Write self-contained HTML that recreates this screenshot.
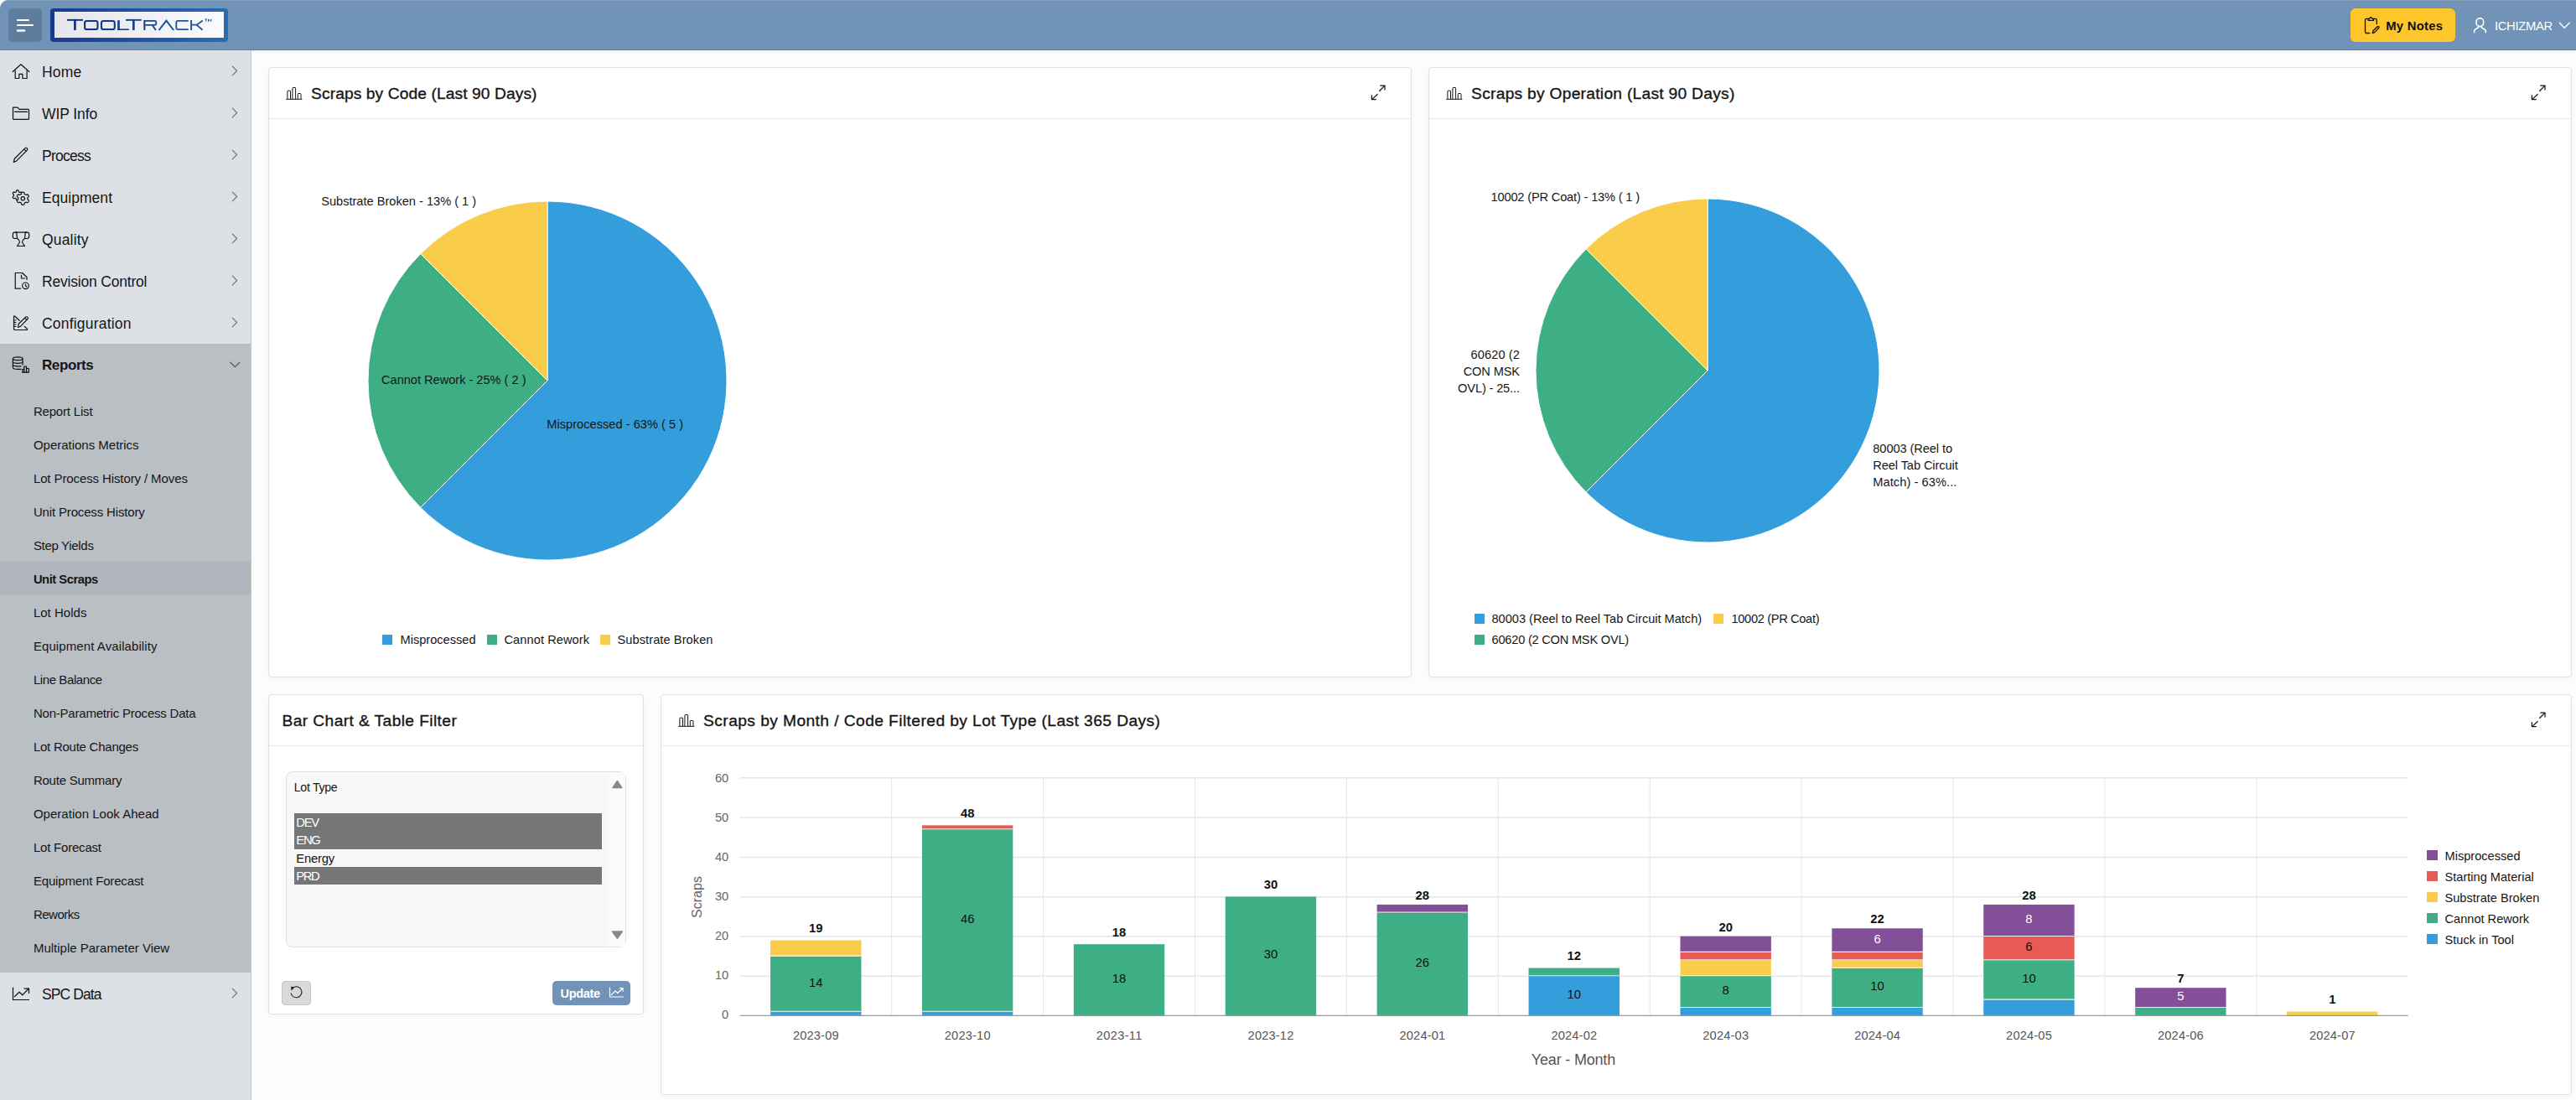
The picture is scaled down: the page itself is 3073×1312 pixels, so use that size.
<!DOCTYPE html>
<html><head><meta charset="utf-8"><title>Unit Scraps</title><style>*{box-sizing:border-box;margin:0;padding:0}
html,body{width:3073px;height:1312px;overflow:hidden;background:#fcfcfc;font-family:"Liberation Sans",sans-serif;color:#161616}
.abs{position:absolute}
.tx{position:absolute;white-space:pre}
#hdr{position:absolute;left:0;top:0;width:3073px;height:60px;background:#7093b7;border-bottom:1px solid #5f7f9f;border-top-left-radius:10px;box-shadow:inset 0 1px 0 #84a1bd,0 1px 3px rgba(0,0,0,0.08)}
#side{position:absolute;left:0;top:60px;width:300px;height:1252px;background:#dde0e4;border-right:1px solid #c3c6cb}
.panel{position:absolute;background:#fff;border:1px solid #e2e2e2;border-radius:4px;box-shadow:0 2px 4px rgba(0,0,0,0.035)}
.ph{position:absolute;left:0;top:0;right:0;height:61px;border-bottom:1px solid #e8e8e8}
</style></head><body>
<div id="hdr"></div>
<div class="abs" style="left:10px;top:10px;width:40px;height:40px;background:#5e7c9b;border-radius:5px"></div>
<svg class="abs" style="left:0;top:0" width="60" height="60"><g stroke="#fff" stroke-linecap="round"><path d="M21 24H34" stroke-width="2"/><path d="M21 30H39" stroke-width="2"/><path d="M21 36.5H29" stroke-width="2.6"/></g></svg>
<div class="abs" style="left:60px;top:10px;width:212px;height:40px;border-radius:4px;background:linear-gradient(90deg,#173b8b,#2a6cb1)"></div>
<div class="abs" style="left:65px;top:14px;width:202px;height:31px;background:linear-gradient(90deg,#e5e5ea,#fafbfd)"></div>
<svg class="abs" style="left:0;top:0" width="300" height="60">
<defs><linearGradient id="lg" gradientUnits="userSpaceOnUse" x1="80" y1="0" x2="252" y2="0"><stop offset="0" stop-color="#0a2c80"/><stop offset="1" stop-color="#1f5ea7"/></linearGradient></defs>
<g fill="url(#lg)">
<rect x="80" y="22.9" width="19" height="1.9"/><rect x="88.1" y="22.9" width="2.6" height="13.1"/>
<rect x="140.2" y="24.2" width="2.6" height="11.8"/><rect x="140.2" y="34.4" width="13.6" height="1.6"/>
<rect x="150" y="22.9" width="18.7" height="1.9"/><rect x="158" y="22.9" width="2.7" height="13.1"/>
<rect x="171.3" y="24" width="2.1" height="12"/>
<rect x="227.1" y="24" width="2" height="12"/>
</g>
<g fill="none" stroke="url(#lg)">
<rect x="101.1" y="25.05" width="15.4" height="9.95" rx="2.3" stroke-width="2.1"/>
<rect x="121" y="25.05" width="15.8" height="9.95" rx="2.3" stroke-width="2.1"/>
<path d="M172.2 24.9H184.3Q186.3 24.9 186.3 26.9V27.8Q186.3 29.8 184.3 29.8H172.2" stroke-width="1.8"/>
<path d="M181.6 29.8L185.9 36" stroke-width="2"/>
<path d="M189.6 36L198.4 24.7L207.2 36" stroke-width="2"/>
<path d="M224.8 24.9H212.4Q210.3 24.9 210.3 27V33Q210.3 35.1 212.4 35.1H224.8" stroke-width="1.8"/>
<path d="M241.8 24.6L234.6 29.7L241.6 35.8M228.5 29.7H234.6" stroke-width="1.8"/>
</g>
<g fill="#2263a9"><rect x="244.5" y="22.5" width="2.6" height="0.9"/><rect x="245.35" y="22.5" width="0.9" height="3.4"/></g><path d="M248.5 25.9V22.9L250.2 24.8L251.9 22.9V25.9" fill="none" stroke="#2263a9" stroke-width="1"/>
</svg>
<div class="abs" style="left:2804px;top:10px;width:125px;height:40px;background:#fec62a;border-radius:6px"></div>
<svg class="abs" style="left:2815px;top:15px" width="30" height="30" viewBox="0 0 30 30" fill="none" stroke="#111" stroke-width="1.3" stroke-linejoin="round" stroke-linecap="round"><path d="M11.7 24.5H8Q6.5 24.5 6.5 23V8.9Q6.5 7.4 8 7.4H10.5"/><path d="M16.2 7.4H18.8Q20.3 7.4 20.3 8.9V13.6"/><path d="M10.2 9.4H16.5V8.2L13.3 5.4L10.2 8.2Z"/><path d="M15.3 24.6L16 21.7L21.2 16.7Q22 16 22.8 16.7Q23.5 17.5 22.8 18.3L17.7 23.6Z"/></svg>
<svg class="abs" style="left:2943px;top:15px" width="30" height="30" viewBox="0 0 30 30" fill="none" stroke="#fff" stroke-width="1.6" stroke-linecap="round"><ellipse cx="15.4" cy="11.6" rx="4.4" ry="5"/><path d="M8.6 23.6V22Q8.6 20.3 10.6 19.5L12.2 18.8Q13.4 18.2 13.9 16.6"/><path d="M22.2 23.6V22Q22.2 20.3 20.2 19.5L18.6 18.8Q17.4 18.2 16.9 16.6"/></svg>
<svg class="abs" style="left:3045px;top:15px" width="30" height="30" viewBox="0 0 30 30" fill="none" stroke="#fff" stroke-width="1.4" stroke-linecap="round" stroke-linejoin="round"><path d="M8.3 12.3L14.2 18.2L20.1 12.3"/></svg>
<div id="side"></div>
<div class="abs" style="left:0;top:410px;width:299px;height:750px;background:#babfc4"></div>
<div class="abs" style="left:0;top:670px;width:299px;height:40px;background:#b1b5be"></div>
<svg class="abs" style="left:10px;top:70px" width="30" height="30" viewBox="0 0 30 30" fill="none" stroke="#111" stroke-width="1.2" stroke-linejoin="round" stroke-linecap="round"><path d="M5.2 15.5L15 6.8L24.8 15.5"/><path d="M8.2 14V23.5H12.8V18.3H16.9V23.5H22.1V14"/></svg>
<svg class="abs" style="left:265px;top:70px" width="30" height="30" viewBox="0 0 30 30" fill="none" stroke="#707070" stroke-width="1.15" stroke-linecap="round" stroke-linejoin="round"><path d="M12.3 9.2L17.6 14.5L12.3 19.8"/></svg>
<svg class="abs" style="left:10px;top:120px" width="30" height="30" viewBox="0 0 30 30" fill="none" stroke="#111" stroke-width="1.2" stroke-linejoin="round" stroke-linecap="round"><path d="M5.5 8.2H10.9L13.1 10.4H23.5Q24.5 10.4 24.5 11.4V21.4Q24.5 22.4 23.5 22.4H6.5Q5.5 22.4 5.5 21.4Z"/><path d="M7.5 13.4H22.5"/></svg>
<svg class="abs" style="left:265px;top:120px" width="30" height="30" viewBox="0 0 30 30" fill="none" stroke="#707070" stroke-width="1.15" stroke-linecap="round" stroke-linejoin="round"><path d="M12.3 9.2L17.6 14.5L12.3 19.8"/></svg>
<svg class="abs" style="left:10px;top:170px" width="30" height="30" viewBox="0 0 30 30" fill="none" stroke="#111" stroke-width="1.2" stroke-linejoin="round" stroke-linecap="round"><path d="M6.3 23.5L7.2 19.5L19.8 6.9Q21.3 5.6 22.4 6.9Q23.5 8.2 22.1 9.4L9.5 22.2Z"/><path d="M19 8.2L21 10.2"/></svg>
<svg class="abs" style="left:265px;top:170px" width="30" height="30" viewBox="0 0 30 30" fill="none" stroke="#707070" stroke-width="1.15" stroke-linecap="round" stroke-linejoin="round"><path d="M12.3 9.2L17.6 14.5L12.3 19.8"/></svg>
<svg class="abs" style="left:10px;top:220px" width="30" height="30" viewBox="0 0 30 30" fill="none" stroke="#111" stroke-width="1.2" stroke-linejoin="round" stroke-linecap="round"><path d="M15.10 12.90L15.10 12.75L15.10 12.60L15.09 12.45L15.10 12.29L15.15 12.13L15.29 11.95L15.58 11.71L15.96 11.42L16.23 11.14L16.33 10.89L16.32 10.67L16.26 10.47L16.19 10.27L16.10 10.08L16.00 9.90L15.89 9.72L15.77 9.55L15.64 9.38L15.49 9.24L15.30 9.12L15.04 9.08L14.66 9.17L14.22 9.35L13.87 9.49L13.64 9.51L13.48 9.47L13.34 9.41L13.21 9.33L13.08 9.25L12.95 9.18L12.82 9.10L12.69 9.03L12.56 8.96L12.43 8.87L12.31 8.75L12.22 8.53L12.16 8.16L12.10 7.69L11.99 7.32L11.82 7.11L11.63 7.01L11.43 6.95L11.22 6.92L11.01 6.90L10.80 6.90L10.59 6.90L10.38 6.92L10.17 6.95L9.97 7.01L9.78 7.11L9.61 7.32L9.50 7.69L9.44 8.16L9.38 8.53L9.29 8.75L9.17 8.87L9.04 8.96L8.91 9.03L8.78 9.10L8.65 9.18L8.52 9.25L8.39 9.33L8.26 9.41L8.12 9.47L7.96 9.51L7.73 9.49L7.38 9.35L6.94 9.17L6.56 9.08L6.30 9.12L6.11 9.24L5.96 9.38L5.83 9.55L5.71 9.72L5.60 9.90L5.50 10.08L5.41 10.27L5.34 10.47L5.28 10.67L5.27 10.89L5.37 11.14L5.64 11.42L6.02 11.71L6.31 11.95L6.45 12.13L6.50 12.29L6.51 12.45L6.50 12.60L6.50 12.75L6.50 12.90L6.50 13.05L6.50 13.20L6.51 13.35L6.50 13.51L6.45 13.67L6.31 13.85L6.02 14.09L5.64 14.38L5.37 14.66L5.27 14.91L5.28 15.13L5.34 15.33L5.41 15.53L5.50 15.72L5.60 15.90L5.71 16.08L5.83 16.25L5.96 16.42L6.11 16.56L6.30 16.68L6.56 16.72L6.94 16.63L7.38 16.45L7.73 16.31L7.96 16.29L8.12 16.33L8.26 16.39L8.39 16.47L8.52 16.55L8.65 16.62L8.78 16.70L8.91 16.77L9.04 16.84L9.17 16.93L9.29 17.05L9.38 17.27L9.44 17.64L9.50 18.11L9.61 18.48L9.78 18.69L9.97 18.79L10.17 18.85L10.38 18.88L10.59 18.90L10.80 18.90L11.01 18.90L11.22 18.88L11.43 18.85L11.63 18.79L11.82 18.69L11.99 18.48L12.10 18.11L12.16 17.64L12.22 17.27L12.31 17.05L12.43 16.93L12.56 16.84L12.69 16.77L12.82 16.70L12.95 16.62L13.08 16.55L13.21 16.47L13.34 16.39L13.48 16.33L13.64 16.29L13.87 16.31L14.22 16.45L14.66 16.63L15.04 16.72L15.30 16.68L15.49 16.56L15.64 16.42L15.77 16.25L15.89 16.08L16.00 15.90L16.10 15.72L16.19 15.53L16.26 15.33L16.32 15.13L16.33 14.91L16.23 14.66L15.96 14.38L15.58 14.09L15.29 13.85L15.15 13.67L15.10 13.51L15.09 13.35L15.10 13.20L15.10 13.05Z"/><path d="M22.90 16.80L22.90 16.60L22.89 16.41L22.89 16.21L22.90 16.01L22.95 15.80L23.11 15.56L23.45 15.27L23.89 14.91L24.20 14.56L24.31 14.25L24.30 13.97L24.22 13.72L24.12 13.47L24.01 13.23L23.88 13.00L23.74 12.77L23.59 12.55L23.43 12.35L23.25 12.16L23.01 12.00L22.69 11.94L22.23 12.04L21.70 12.24L21.28 12.38L20.99 12.40L20.78 12.34L20.60 12.25L20.44 12.15L20.27 12.05L20.10 11.95L19.93 11.85L19.76 11.76L19.59 11.66L19.42 11.56L19.26 11.41L19.14 11.15L19.05 10.70L18.96 10.14L18.81 9.70L18.60 9.45L18.35 9.33L18.09 9.26L17.83 9.23L17.57 9.21L17.30 9.20L17.03 9.21L16.77 9.23L16.51 9.26L16.25 9.33L16.00 9.45L15.79 9.70L15.64 10.14L15.55 10.70L15.46 11.15L15.34 11.41L15.18 11.56L15.01 11.66L14.84 11.76L14.67 11.85L14.50 11.95L14.33 12.05L14.16 12.15L14.00 12.25L13.82 12.34L13.61 12.40L13.32 12.38L12.90 12.24L12.37 12.04L11.91 11.94L11.59 12.00L11.35 12.16L11.17 12.35L11.01 12.55L10.86 12.77L10.72 13.00L10.59 13.23L10.48 13.47L10.38 13.72L10.30 13.97L10.29 14.25L10.40 14.56L10.71 14.91L11.15 15.27L11.49 15.56L11.65 15.80L11.70 16.01L11.71 16.21L11.71 16.41L11.70 16.60L11.70 16.80L11.70 17.00L11.71 17.19L11.71 17.39L11.70 17.59L11.65 17.80L11.49 18.04L11.15 18.33L10.71 18.69L10.40 19.04L10.29 19.35L10.30 19.63L10.38 19.88L10.48 20.13L10.59 20.37L10.72 20.60L10.86 20.83L11.01 21.05L11.17 21.25L11.35 21.44L11.59 21.60L11.91 21.66L12.37 21.56L12.90 21.36L13.32 21.22L13.61 21.20L13.82 21.26L14.00 21.35L14.16 21.45L14.33 21.55L14.50 21.65L14.67 21.75L14.84 21.84L15.01 21.94L15.18 22.04L15.34 22.19L15.46 22.45L15.55 22.90L15.64 23.46L15.79 23.90L16.00 24.15L16.25 24.27L16.51 24.34L16.77 24.37L17.03 24.39L17.30 24.40L17.57 24.39L17.83 24.37L18.09 24.34L18.35 24.27L18.60 24.15L18.81 23.90L18.96 23.46L19.05 22.90L19.14 22.45L19.26 22.19L19.42 22.04L19.59 21.94L19.76 21.84L19.93 21.75L20.10 21.65L20.27 21.55L20.44 21.45L20.60 21.35L20.78 21.26L20.99 21.20L21.28 21.22L21.70 21.36L22.23 21.56L22.69 21.66L23.01 21.60L23.25 21.44L23.43 21.25L23.59 21.05L23.74 20.83L23.88 20.60L24.01 20.37L24.12 20.13L24.22 19.88L24.30 19.63L24.31 19.35L24.20 19.04L23.89 18.69L23.45 18.33L23.11 18.04L22.95 17.80L22.90 17.59L22.89 17.39L22.89 17.19L22.90 17.00Z" fill="#dde0e4"/><circle cx="17.3" cy="16.8" r="2.2"/></svg>
<svg class="abs" style="left:265px;top:220px" width="30" height="30" viewBox="0 0 30 30" fill="none" stroke="#707070" stroke-width="1.15" stroke-linecap="round" stroke-linejoin="round"><path d="M12.3 9.2L17.6 14.5L12.3 19.8"/></svg>
<svg class="abs" style="left:10px;top:270px" width="30" height="30" viewBox="0 0 30 30" fill="none" stroke="#111" stroke-width="1.2" stroke-linejoin="round" stroke-linecap="round"><path d="M9.8 7.2H7.5Q5.2 7.2 5.2 10.8Q5.2 14.5 7.5 14.5H10.3"/><path d="M20.2 7.2H22.5Q24.8 7.2 24.8 10.8Q24.8 14.5 22.5 14.5H19.7"/><path d="M8.5 7.2H21.5"/><path d="M9.8 7.2L10.3 14Q13.5 16.5 13.5 19L10.5 23.5H19.5L16.5 19Q16.5 16.5 19.7 14L20.2 7.2"/></svg>
<svg class="abs" style="left:265px;top:270px" width="30" height="30" viewBox="0 0 30 30" fill="none" stroke="#707070" stroke-width="1.15" stroke-linecap="round" stroke-linejoin="round"><path d="M12.3 9.2L17.6 14.5L12.3 19.8"/></svg>
<svg class="abs" style="left:10px;top:320px" width="30" height="30" viewBox="0 0 30 30" fill="none" stroke="#111" stroke-width="1.2" stroke-linejoin="round" stroke-linecap="round"><path d="M14.5 24.2H8.2V5.5H16.5L22 10.5V13.5"/><path d="M15.5 8V12H19.5"/><circle cx="20.5" cy="20.8" r="3.8"/><path d="M20.5 19.2V20.8L21.7 22"/></svg>
<svg class="abs" style="left:265px;top:320px" width="30" height="30" viewBox="0 0 30 30" fill="none" stroke="#707070" stroke-width="1.15" stroke-linecap="round" stroke-linejoin="round"><path d="M12.3 9.2L17.6 14.5L12.3 19.8"/></svg>
<svg class="abs" style="left:10px;top:370px" width="30" height="30" viewBox="0 0 30 30" fill="none" stroke="#111" stroke-width="1.2" stroke-linejoin="round" stroke-linecap="round"><path d="M13.2 12.3L7.8 7.3Q6.5 6.3 6.5 8V22.2Q6.5 23.5 7.8 23.5H21.8Q23.5 23.5 22.2 22.2L19.2 19.3"/><path d="M7 12H9M7 14.5H9M7 17H9M7 19.5H9"/><path d="M11.5 20.5L12.3 16.3L20.5 8.3Q22 7.2 23 8.3Q24 9.5 22.8 10.6L14.6 19.2Z"/><path d="M19.7 9.4L21.8 11.5"/></svg>
<svg class="abs" style="left:265px;top:370px" width="30" height="30" viewBox="0 0 30 30" fill="none" stroke="#707070" stroke-width="1.15" stroke-linecap="round" stroke-linejoin="round"><path d="M12.3 9.2L17.6 14.5L12.3 19.8"/></svg>
<svg class="abs" style="left:10px;top:420px" width="30" height="30" viewBox="0 0 30 30" fill="none" stroke="#111" stroke-width="1.2" stroke-linejoin="round" stroke-linecap="round"><ellipse cx="11.2" cy="7.8" rx="5.8" ry="1.9"/><path d="M5.4 7.8V18.2Q5.4 20.3 11.2 20.3H15"/><path d="M17 7.8V15"/><path d="M5.4 11.5Q5.4 13.3 11.2 13.3Q17 13.3 17 11.5"/><path d="M5.4 15Q5.4 16.8 11.2 16.8H15"/><path d="M16.8 24.2V20.5H18.8V17H21.5V19.5H24.3V24.2Z"/><path d="M18.8 20.5V24.2M21.5 19.5V24.2"/></svg>
<svg class="abs" style="left:265px;top:420px" width="30" height="30" viewBox="0 0 30 30" fill="none" stroke="#555" stroke-width="1.3" stroke-linecap="round" stroke-linejoin="round"><path d="M9.8 12.3L15.3 17.6L20.8 12.3"/></svg>
<svg class="abs" style="left:10px;top:1170px" width="30" height="30" viewBox="0 0 30 30" fill="none" stroke="#111" stroke-width="1.2" stroke-linejoin="round" stroke-linecap="round"><path d="M5.5 8V22.5H24.5"/><path d="M7.5 18.5L13 13.2L16.8 16.8L23.8 9.5"/><path d="M19 9.2H24.5V14.5"/></svg>
<svg class="abs" style="left:265px;top:1170px" width="30" height="30" viewBox="0 0 30 30" fill="none" stroke="#707070" stroke-width="1.15" stroke-linecap="round" stroke-linejoin="round"><path d="M12.3 9.2L17.6 14.5L12.3 19.8"/></svg>
<div class="panel" style="left:320px;top:80px;width:1364px;height:728px"><div class="ph"></div></div>
<div class="panel" style="left:1704px;top:80px;width:1364px;height:728px"><div class="ph"></div></div>
<div class="panel" style="left:320px;top:828px;width:448px;height:382px"><div class="ph"></div></div>
<div class="panel" style="left:788px;top:828px;width:2280px;height:478px"><div class="ph"></div></div>
<svg class="abs" style="left:335px;top:95px" width="30" height="30" viewBox="0 0 30 30" fill="none" stroke="#161616" stroke-width="1.0" stroke-linejoin="round"><path d="M6.3 23.3H25.5"/><path d="M7.9 23.3V13.8Q7.9 13.2 8.5 13.2H10.9Q11.5 13.2 11.5 13.8V23.3"/><path d="M13.9 23.3V10.1Q13.9 9.5 14.5 9.5H17Q17.6 9.5 17.6 10.1V23.3"/><path d="M20.3 23.3V17.1Q20.3 16.5 20.9 16.5H23.4Q24 16.5 24 17.1V23.3"/></svg>
<svg class="abs" style="left:1630px;top:95px" width="30" height="30" viewBox="0 0 30 30" fill="none" stroke="#161616" stroke-width="1.25" stroke-linejoin="round"><path d="M16.3 7.1H22V12.5"/><path d="M22 7.1L15.3 13.8"/><path d="M13.5 17.2L6.4 23.9"/><path d="M6.4 18.2V23.5H11.8"/></svg>
<svg class="abs" style="left:1719px;top:95px" width="30" height="30" viewBox="0 0 30 30" fill="none" stroke="#161616" stroke-width="1.0" stroke-linejoin="round"><path d="M6.3 23.3H25.5"/><path d="M7.9 23.3V13.8Q7.9 13.2 8.5 13.2H10.9Q11.5 13.2 11.5 13.8V23.3"/><path d="M13.9 23.3V10.1Q13.9 9.5 14.5 9.5H17Q17.6 9.5 17.6 10.1V23.3"/><path d="M20.3 23.3V17.1Q20.3 16.5 20.9 16.5H23.4Q24 16.5 24 17.1V23.3"/></svg>
<svg class="abs" style="left:3014px;top:95px" width="30" height="30" viewBox="0 0 30 30" fill="none" stroke="#161616" stroke-width="1.25" stroke-linejoin="round"><path d="M16.3 7.1H22V12.5"/><path d="M22 7.1L15.3 13.8"/><path d="M13.5 17.2L6.4 23.9"/><path d="M6.4 18.2V23.5H11.8"/></svg>
<svg class="abs" style="left:803px;top:843px" width="30" height="30" viewBox="0 0 30 30" fill="none" stroke="#161616" stroke-width="1.0" stroke-linejoin="round"><path d="M6.3 23.3H25.5"/><path d="M7.9 23.3V13.8Q7.9 13.2 8.5 13.2H10.9Q11.5 13.2 11.5 13.8V23.3"/><path d="M13.9 23.3V10.1Q13.9 9.5 14.5 9.5H17Q17.6 9.5 17.6 10.1V23.3"/><path d="M20.3 23.3V17.1Q20.3 16.5 20.9 16.5H23.4Q24 16.5 24 17.1V23.3"/></svg>
<svg class="abs" style="left:3014px;top:843px" width="30" height="30" viewBox="0 0 30 30" fill="none" stroke="#161616" stroke-width="1.25" stroke-linejoin="round"><path d="M16.3 7.1H22V12.5"/><path d="M22 7.1L15.3 13.8"/><path d="M13.5 17.2L6.4 23.9"/><path d="M6.4 18.2V23.5H11.8"/></svg>
<svg class="abs" style="left:0;top:0" width="3073" height="1312"><path d="M653 454L653.00 240.00A214 214 0 1 1 501.68 605.32Z" fill="#339edb" stroke="#fff" stroke-width="1" stroke-linejoin="round"/><path d="M653 454L501.68 605.32A214 214 0 0 1 501.68 302.68Z" fill="#3eae84" stroke="#fff" stroke-width="1" stroke-linejoin="round"/><path d="M653 454L501.68 302.68A214 214 0 0 1 653.00 240.00Z" fill="#f9cd4a" stroke="#fff" stroke-width="1" stroke-linejoin="round"/><path d="M2037 442L2037.00 237.00A205 205 0 1 1 1892.04 586.96Z" fill="#339edb" stroke="#fff" stroke-width="1" stroke-linejoin="round"/><path d="M2037 442L1892.04 586.96A205 205 0 0 1 1892.04 297.04Z" fill="#3eae84" stroke="#fff" stroke-width="1" stroke-linejoin="round"/><path d="M2037 442L1892.04 297.04A205 205 0 0 1 2037.00 237.00Z" fill="#f9cd4a" stroke="#fff" stroke-width="1" stroke-linejoin="round"/></svg>
<div class="abs" style="left:456px;top:757px;width:12px;height:12px;background:#339edb"></div>
<div class="abs" style="left:581px;top:757px;width:12px;height:12px;background:#3eae84"></div>
<div class="abs" style="left:716px;top:757px;width:12px;height:12px;background:#f9cd4a"></div>
<div class="abs" style="left:1759px;top:732px;width:12px;height:12px;background:#339edb"></div>
<div class="abs" style="left:2044px;top:732px;width:12px;height:12px;background:#f9cd4a"></div>
<div class="abs" style="left:1759px;top:757px;width:12px;height:12px;background:#3eae84"></div>
<div class="abs" style="left:341px;top:920px;width:406px;height:210px;background:#f8f8f8;border:1px solid #dedede;border-radius:8px"></div>
<div class="abs" style="left:726px;top:921px;width:20px;height:208px;background:#fbfbfb"></div>
<svg class="abs" style="left:720px;top:920px" width="30" height="210"><path d="M11.2 19.4L16.35 11.8L21.5 19.4Z" fill="#898989" stroke="#898989" stroke-width="1.8" stroke-linejoin="round"/><path d="M10.7 191.1L22.1 191.1L16.4 199Z" fill="#898989" stroke="#898989" stroke-width="1.8" stroke-linejoin="round"/></svg>
<div class="abs" style="left:351px;top:970px;width:367px;height:43px;background:#767676"></div>
<div class="abs" style="left:351px;top:1034px;width:367px;height:21px;background:#767676"></div>
<div class="abs" style="left:336px;top:1170px;width:35px;height:29px;background:#d9d9d9;border:1px solid #c6c6c6;border-radius:4px"></div>
<svg class="abs" style="left:333px;top:1165px" width="42" height="37" viewBox="0 0 42 37"><path d="M14.1 19.6A6.5 6.5 0 1 0 17.6 12.4" fill="none" stroke="#1a1a1a" stroke-width="1.05"/><path d="M14.1 11.8L18.6 12.2L14.6 16.7Z" fill="#1a1a1a"/></svg>
<div class="abs" style="left:659px;top:1170px;width:93px;height:29px;background:#7093b7;border-radius:5px"></div>
<svg class="abs" style="left:724px;top:1169px" width="24" height="24" viewBox="0 0 24 24" fill="none" stroke="#fff" stroke-width="1.2" stroke-linecap="round" stroke-linejoin="round"><path d="M3.5 9V20H19.5"/><path d="M5.3 17.5L10 13L12.8 15.5L18.8 10"/><path d="M15.5 9.7H19V13.2"/></svg>
<svg class="abs" style="left:0;top:0" width="3073" height="1312"><line x1="882.8" y1="1164.22" x2="2872.70" y2="1164.22" stroke="#e2e5e9" stroke-width="1.5"/><line x1="882.8" y1="1116.94" x2="2872.70" y2="1116.94" stroke="#e2e5e9" stroke-width="1.5"/><line x1="882.8" y1="1069.66" x2="2872.70" y2="1069.66" stroke="#e2e5e9" stroke-width="1.5"/><line x1="882.8" y1="1022.38" x2="2872.70" y2="1022.38" stroke="#e2e5e9" stroke-width="1.5"/><line x1="882.8" y1="975.10" x2="2872.70" y2="975.10" stroke="#e2e5e9" stroke-width="1.5"/><line x1="882.8" y1="927.82" x2="2872.70" y2="927.82" stroke="#e2e5e9" stroke-width="1.5"/><line x1="1063.70" y1="927.62" x2="1063.70" y2="1211.30" stroke="#e5e8ec" stroke-width="1.05"/><line x1="1244.60" y1="927.62" x2="1244.60" y2="1211.30" stroke="#e5e8ec" stroke-width="1.05"/><line x1="1425.50" y1="927.62" x2="1425.50" y2="1211.30" stroke="#e5e8ec" stroke-width="1.05"/><line x1="1606.40" y1="927.62" x2="1606.40" y2="1211.30" stroke="#e5e8ec" stroke-width="1.05"/><line x1="1787.30" y1="927.62" x2="1787.30" y2="1211.30" stroke="#e5e8ec" stroke-width="1.05"/><line x1="1968.20" y1="927.62" x2="1968.20" y2="1211.30" stroke="#e5e8ec" stroke-width="1.05"/><line x1="2149.10" y1="927.62" x2="2149.10" y2="1211.30" stroke="#e5e8ec" stroke-width="1.05"/><line x1="2330.00" y1="927.62" x2="2330.00" y2="1211.30" stroke="#e5e8ec" stroke-width="1.05"/><line x1="2510.90" y1="927.62" x2="2510.90" y2="1211.30" stroke="#e5e8ec" stroke-width="1.05"/><line x1="2691.80" y1="927.62" x2="2691.80" y2="1211.30" stroke="#e5e8ec" stroke-width="1.05"/><rect x="919.05" y="1206.57" width="108.4" height="4.73" fill="#339edb"/><rect x="919.05" y="1140.38" width="108.4" height="66.19" fill="#3eae84"/><rect x="919.05" y="1121.47" width="108.4" height="18.91" fill="#f9cd4a"/><line x1="919.05" y1="1206.27" x2="1027.45" y2="1206.27" stroke="rgba(255,255,255,0.85)" stroke-width="1.1"/><line x1="919.05" y1="1140.08" x2="1027.45" y2="1140.08" stroke="rgba(255,255,255,0.85)" stroke-width="1.1"/><rect x="1099.95" y="1206.57" width="108.4" height="4.73" fill="#339edb"/><rect x="1099.95" y="989.08" width="108.4" height="217.49" fill="#3eae84"/><rect x="1099.95" y="984.36" width="108.4" height="4.73" fill="#e85b54"/><line x1="1099.95" y1="1206.27" x2="1208.35" y2="1206.27" stroke="rgba(255,255,255,0.85)" stroke-width="1.1"/><line x1="1099.95" y1="988.78" x2="1208.35" y2="988.78" stroke="rgba(255,255,255,0.85)" stroke-width="1.1"/><rect x="1280.85" y="1126.20" width="108.4" height="85.10" fill="#3eae84"/><rect x="1461.75" y="1069.46" width="108.4" height="141.84" fill="#3eae84"/><rect x="1642.65" y="1088.37" width="108.4" height="122.93" fill="#3eae84"/><rect x="1642.65" y="1078.92" width="108.4" height="9.46" fill="#834f99"/><line x1="1642.65" y1="1088.07" x2="1751.05" y2="1088.07" stroke="rgba(255,255,255,0.85)" stroke-width="1.1"/><rect x="1823.55" y="1164.02" width="108.4" height="47.28" fill="#339edb"/><rect x="1823.55" y="1154.56" width="108.4" height="9.46" fill="#3eae84"/><line x1="1823.55" y1="1163.72" x2="1931.95" y2="1163.72" stroke="rgba(255,255,255,0.85)" stroke-width="1.1"/><rect x="2004.45" y="1201.84" width="108.4" height="9.46" fill="#339edb"/><rect x="2004.45" y="1164.02" width="108.4" height="37.82" fill="#3eae84"/><rect x="2004.45" y="1145.11" width="108.4" height="18.91" fill="#f9cd4a"/><rect x="2004.45" y="1135.65" width="108.4" height="9.46" fill="#e85b54"/><rect x="2004.45" y="1116.74" width="108.4" height="18.91" fill="#834f99"/><line x1="2004.45" y1="1201.54" x2="2112.85" y2="1201.54" stroke="rgba(255,255,255,0.85)" stroke-width="1.1"/><line x1="2004.45" y1="1163.72" x2="2112.85" y2="1163.72" stroke="rgba(255,255,255,0.85)" stroke-width="1.1"/><line x1="2004.45" y1="1144.81" x2="2112.85" y2="1144.81" stroke="rgba(255,255,255,0.85)" stroke-width="1.1"/><line x1="2004.45" y1="1135.35" x2="2112.85" y2="1135.35" stroke="rgba(255,255,255,0.85)" stroke-width="1.1"/><rect x="2185.35" y="1201.84" width="108.4" height="9.46" fill="#339edb"/><rect x="2185.35" y="1154.56" width="108.4" height="47.28" fill="#3eae84"/><rect x="2185.35" y="1145.11" width="108.4" height="9.46" fill="#f9cd4a"/><rect x="2185.35" y="1135.65" width="108.4" height="9.46" fill="#e85b54"/><rect x="2185.35" y="1107.28" width="108.4" height="28.37" fill="#834f99"/><line x1="2185.35" y1="1201.54" x2="2293.75" y2="1201.54" stroke="rgba(255,255,255,0.85)" stroke-width="1.1"/><line x1="2185.35" y1="1154.26" x2="2293.75" y2="1154.26" stroke="rgba(255,255,255,0.85)" stroke-width="1.1"/><line x1="2185.35" y1="1144.81" x2="2293.75" y2="1144.81" stroke="rgba(255,255,255,0.85)" stroke-width="1.1"/><line x1="2185.35" y1="1135.35" x2="2293.75" y2="1135.35" stroke="rgba(255,255,255,0.85)" stroke-width="1.1"/><rect x="2366.25" y="1192.39" width="108.4" height="18.91" fill="#339edb"/><rect x="2366.25" y="1145.11" width="108.4" height="47.28" fill="#3eae84"/><rect x="2366.25" y="1116.74" width="108.4" height="28.37" fill="#e85b54"/><rect x="2366.25" y="1078.92" width="108.4" height="37.82" fill="#834f99"/><line x1="2366.25" y1="1192.09" x2="2474.65" y2="1192.09" stroke="rgba(255,255,255,0.85)" stroke-width="1.1"/><line x1="2366.25" y1="1144.81" x2="2474.65" y2="1144.81" stroke="rgba(255,255,255,0.85)" stroke-width="1.1"/><line x1="2366.25" y1="1116.44" x2="2474.65" y2="1116.44" stroke="rgba(255,255,255,0.85)" stroke-width="1.1"/><rect x="2547.15" y="1201.84" width="108.4" height="9.46" fill="#3eae84"/><rect x="2547.15" y="1178.20" width="108.4" height="23.64" fill="#834f99"/><line x1="2547.15" y1="1201.54" x2="2655.55" y2="1201.54" stroke="rgba(255,255,255,0.85)" stroke-width="1.1"/><rect x="2728.05" y="1206.57" width="108.4" height="4.73" fill="#f9cd4a"/><line x1="882.8" y1="1211.3" x2="2872.70" y2="1211.3" stroke="#9a9a9a" stroke-width="1.3"/></svg>
<div class="tx" style="left:832.3px;top:1070px;font-size:16px;line-height:20px;color:#666;transform:translate(-50%,-50%) rotate(-90deg)">Scraps</div>
<div class="abs" style="left:2895px;top:1014px;width:13px;height:12px;background:#834f99"></div>
<div class="abs" style="left:2895px;top:1039px;width:13px;height:12px;background:#e85b54"></div>
<div class="abs" style="left:2895px;top:1064px;width:13px;height:12px;background:#f9cd4a"></div>
<div class="abs" style="left:2895px;top:1089px;width:13px;height:12px;background:#3eae84"></div>
<div class="abs" style="left:2895px;top:1114px;width:13px;height:12px;background:#339edb"></div>
<div class="tx" style="left:2846.20px;top:21.17px;font-size:14.8px;line-height:20px;color:#111;font-weight:700;letter-spacing:0.288px">My Notes</div>
<div class="tx" style="left:2976.00px;top:21.17px;font-size:14.8px;line-height:20px;color:#fff;letter-spacing:-0.345px">ICHIZMAR</div>
<div class="tx" style="left:50.00px;top:76.11px;font-size:17.5px;line-height:20px;color:#161616;letter-spacing:0.171px">Home</div>
<div class="tx" style="left:50.00px;top:126.12px;font-size:17.5px;line-height:20px;color:#161616;letter-spacing:-0.071px">WIP Info</div>
<div class="tx" style="left:50.00px;top:176.12px;font-size:17.5px;line-height:20px;color:#161616;letter-spacing:-0.753px">Process</div>
<div class="tx" style="left:50.00px;top:226.12px;font-size:17.5px;line-height:20px;color:#161616;letter-spacing:0.041px">Equipment</div>
<div class="tx" style="left:50.00px;top:276.12px;font-size:17.5px;line-height:20px;color:#161616;letter-spacing:0.172px">Quality</div>
<div class="tx" style="left:50.00px;top:326.12px;font-size:17.5px;line-height:20px;color:#161616;letter-spacing:-0.193px">Revision Control</div>
<div class="tx" style="left:50.00px;top:376.12px;font-size:17.5px;line-height:20px;color:#161616;letter-spacing:0.199px">Configuration</div>
<div class="tx" style="left:50.00px;top:426.11px;font-size:17px;line-height:20px;color:#161616;font-weight:700;letter-spacing:-0.406px">Reports</div>
<div class="tx" style="left:39.90px;top:480.87px;font-size:15px;line-height:20px;color:#161616;letter-spacing:-0.185px">Report List</div>
<div class="tx" style="left:39.90px;top:520.87px;font-size:15px;line-height:20px;color:#161616;letter-spacing:-0.010px">Operations Metrics</div>
<div class="tx" style="left:39.90px;top:560.87px;font-size:15px;line-height:20px;color:#161616;letter-spacing:-0.105px">Lot Process History / Moves</div>
<div class="tx" style="left:39.90px;top:600.87px;font-size:15px;line-height:20px;color:#161616;letter-spacing:-0.157px">Unit Process History</div>
<div class="tx" style="left:39.90px;top:640.87px;font-size:15px;line-height:20px;color:#161616;letter-spacing:-0.306px">Step Yields</div>
<div class="tx" style="left:39.90px;top:680.87px;font-size:14.8px;line-height:20px;color:#161616;font-weight:700;letter-spacing:-0.493px">Unit Scraps</div>
<div class="tx" style="left:39.90px;top:720.87px;font-size:15px;line-height:20px;color:#161616;letter-spacing:0.016px">Lot Holds</div>
<div class="tx" style="left:39.90px;top:760.87px;font-size:15px;line-height:20px;color:#161616;letter-spacing:0.093px">Equipment Availability</div>
<div class="tx" style="left:39.90px;top:800.87px;font-size:15px;line-height:20px;color:#161616;letter-spacing:-0.412px">Line Balance</div>
<div class="tx" style="left:39.90px;top:840.87px;font-size:15px;line-height:20px;color:#161616;letter-spacing:-0.213px">Non-Parametric Process Data</div>
<div class="tx" style="left:39.90px;top:880.87px;font-size:15px;line-height:20px;color:#161616;letter-spacing:-0.248px">Lot Route Changes</div>
<div class="tx" style="left:39.90px;top:920.87px;font-size:15px;line-height:20px;color:#161616;letter-spacing:-0.231px">Route Summary</div>
<div class="tx" style="left:39.90px;top:960.87px;font-size:15px;line-height:20px;color:#161616;letter-spacing:0.026px">Operation Look Ahead</div>
<div class="tx" style="left:39.90px;top:1000.87px;font-size:15px;line-height:20px;color:#161616;letter-spacing:-0.207px">Lot Forecast</div>
<div class="tx" style="left:39.90px;top:1040.87px;font-size:15px;line-height:20px;color:#161616;letter-spacing:-0.161px">Equipment Forecast</div>
<div class="tx" style="left:39.90px;top:1080.87px;font-size:15px;line-height:20px;color:#161616;letter-spacing:-0.477px">Reworks</div>
<div class="tx" style="left:39.90px;top:1120.87px;font-size:15px;line-height:20px;color:#161616">Multiple Parameter View</div>
<div class="tx" style="left:50.00px;top:1176.12px;font-size:17.5px;line-height:20px;color:#161616;letter-spacing:-0.902px">SPC Data</div>
<div class="tx" style="left:371.10px;top:102.45px;font-size:19.2px;line-height:20px;color:#161616;letter-spacing:0.099px;-webkit-text-stroke:0.35px #161616">Scraps by Code (Last 90 Days)</div>
<div class="tx" style="left:1755.10px;top:102.45px;font-size:19.2px;line-height:20px;color:#161616;letter-spacing:0.278px;-webkit-text-stroke:0.35px #161616">Scraps by Operation (Last 90 Days)</div>
<div class="tx" style="left:336.60px;top:850.35px;font-size:19.2px;line-height:20px;color:#161616;letter-spacing:0.397px;-webkit-text-stroke:0.35px #161616">Bar Chart &amp; Table Filter</div>
<div class="tx" style="left:839.10px;top:850.45px;font-size:19.2px;line-height:20px;color:#161616;letter-spacing:0.427px;-webkit-text-stroke:0.35px #161616">Scraps by Month / Code Filtered by Lot Type (Last 365 Days)</div>
<div class="tx" style="left:383.20px;top:229.76px;font-size:14.6px;line-height:20px;color:#161616">Substrate Broken - 13% ( 1 )</div>
<div class="tx" style="left:455.00px;top:442.96px;font-size:14.6px;line-height:20px;color:#161616;letter-spacing:-0.011px">Cannot Rework - 25% ( 2 )</div>
<div class="tx" style="left:652.20px;top:495.76px;font-size:14.6px;line-height:20px;color:#161616;letter-spacing:0.034px">Misprocessed - 63% ( 5 )</div>
<div class="tx" style="left:1778.50px;top:225.26px;font-size:14.6px;line-height:20px;color:#161616;letter-spacing:-0.158px">10002 (PR Coat) - 13% ( 1 )</div>
<div class="tx" style="left:1754.40px;top:412.76px;font-size:14.6px;line-height:20px;color:#161616;letter-spacing:0.139px">60620 (2</div>
<div class="tx" style="left:1745.70px;top:432.76px;font-size:14.6px;line-height:20px;color:#161616;letter-spacing:-0.135px">CON MSK</div>
<div class="tx" style="left:1739.10px;top:452.76px;font-size:14.6px;line-height:20px;color:#161616;letter-spacing:-0.140px">OVL) - 25...</div>
<div class="tx" style="left:2234.30px;top:525.26px;font-size:14.6px;line-height:20px;color:#161616;letter-spacing:-0.073px">80003 (Reel to</div>
<div class="tx" style="left:2234.30px;top:545.26px;font-size:14.6px;line-height:20px;color:#161616;letter-spacing:-0.090px">Reel Tab Circuit</div>
<div class="tx" style="left:2234.30px;top:565.26px;font-size:14.6px;line-height:20px;color:#161616;letter-spacing:0.082px">Match) - 63%...</div>
<div class="tx" style="left:477.50px;top:753.26px;font-size:14.6px;line-height:20px;color:#161616">Misprocessed</div>
<div class="tx" style="left:601.50px;top:753.26px;font-size:14.6px;line-height:20px;color:#161616;letter-spacing:0.076px">Cannot Rework</div>
<div class="tx" style="left:736.50px;top:753.26px;font-size:14.6px;line-height:20px;color:#161616;letter-spacing:0.082px">Substrate Broken</div>
<div class="tx" style="left:1779.50px;top:728.26px;font-size:14.6px;line-height:20px;color:#161616;letter-spacing:-0.016px">80003 (Reel to Reel Tab Circuit Match)</div>
<div class="tx" style="left:2065.50px;top:728.26px;font-size:14.6px;line-height:20px;color:#161616;letter-spacing:-0.323px">10002 (PR Coat)</div>
<div class="tx" style="left:1779.50px;top:753.26px;font-size:14.6px;line-height:20px;color:#161616;letter-spacing:-0.210px">60620 (2 CON MSK OVL)</div>
<div class="tx" style="left:350.80px;top:929.46px;font-size:14.2px;line-height:20px;color:#161616;letter-spacing:-0.325px">Lot Type</div>
<div class="tx" style="left:353.30px;top:970.97px;font-size:14.8px;line-height:20px;color:#fff;letter-spacing:-1.269px">DEV</div>
<div class="tx" style="left:353.30px;top:992.27px;font-size:14.8px;line-height:20px;color:#fff;letter-spacing:-1.289px">ENG</div>
<div class="tx" style="left:353.30px;top:1013.57px;font-size:14.8px;line-height:20px;color:#111;letter-spacing:-0.218px">Energy</div>
<div class="tx" style="left:353.30px;top:1034.97px;font-size:14.8px;line-height:20px;color:#fff;letter-spacing:-1.475px">PRD</div>
<div class="tx" style="left:668.50px;top:1175.06px;font-size:14.5px;line-height:20px;color:#fff;font-weight:700;letter-spacing:-0.291px">Update</div>
<div class="tx" style="left:965.02px;top:1161.54px;font-size:14.8px;line-height:20px;color:#111">14</div>
<div class="tx" style="left:965.02px;top:1096.83px;font-size:14.8px;line-height:20px;color:#111;font-weight:700">19</div>
<div class="tx" style="left:945.90px;top:1224.86px;font-size:14.6px;line-height:20px;color:#555;letter-spacing:0.190px">2023-09</div>
<div class="tx" style="left:1145.92px;top:1085.89px;font-size:14.8px;line-height:20px;color:#111">46</div>
<div class="tx" style="left:1145.92px;top:959.72px;font-size:14.8px;line-height:20px;color:#111;font-weight:700">48</div>
<div class="tx" style="left:1126.80px;top:1224.86px;font-size:14.6px;line-height:20px;color:#555;letter-spacing:0.190px">2023-10</div>
<div class="tx" style="left:1326.82px;top:1156.81px;font-size:14.8px;line-height:20px;color:#111">18</div>
<div class="tx" style="left:1326.82px;top:1101.56px;font-size:14.8px;line-height:20px;color:#111;font-weight:700">18</div>
<div class="tx" style="left:1307.70px;top:1224.86px;font-size:14.6px;line-height:20px;color:#555;letter-spacing:0.369px">2023-11</div>
<div class="tx" style="left:1507.72px;top:1128.45px;font-size:14.8px;line-height:20px;color:#111">30</div>
<div class="tx" style="left:1507.72px;top:1044.83px;font-size:14.8px;line-height:20px;color:#111;font-weight:700">30</div>
<div class="tx" style="left:1488.60px;top:1224.86px;font-size:14.6px;line-height:20px;color:#555;letter-spacing:0.190px">2023-12</div>
<div class="tx" style="left:1688.62px;top:1137.90px;font-size:14.8px;line-height:20px;color:#111">26</div>
<div class="tx" style="left:1688.62px;top:1057.88px;font-size:14.8px;line-height:20px;color:#111;font-weight:700">28</div>
<div class="tx" style="left:1669.50px;top:1224.86px;font-size:14.6px;line-height:20px;color:#555;letter-spacing:0.190px">2024-01</div>
<div class="tx" style="left:1869.52px;top:1175.73px;font-size:14.8px;line-height:20px;color:#111">10</div>
<div class="tx" style="left:1869.52px;top:1129.93px;font-size:14.8px;line-height:20px;color:#111;font-weight:700">12</div>
<div class="tx" style="left:1850.40px;top:1224.86px;font-size:14.6px;line-height:20px;color:#555;letter-spacing:0.190px">2024-02</div>
<div class="tx" style="left:2054.53px;top:1171.00px;font-size:14.8px;line-height:20px;color:#111">8</div>
<div class="tx" style="left:2050.42px;top:1095.71px;font-size:14.8px;line-height:20px;color:#111;font-weight:700">20</div>
<div class="tx" style="left:2031.30px;top:1224.86px;font-size:14.6px;line-height:20px;color:#555;letter-spacing:0.190px">2024-03</div>
<div class="tx" style="left:2231.32px;top:1166.27px;font-size:14.8px;line-height:20px;color:#111">10</div>
<div class="tx" style="left:2235.43px;top:1109.53px;font-size:14.8px;line-height:20px;color:#fff">6</div>
<div class="tx" style="left:2231.32px;top:1086.25px;font-size:14.8px;line-height:20px;color:#111;font-weight:700">22</div>
<div class="tx" style="left:2212.20px;top:1224.86px;font-size:14.6px;line-height:20px;color:#555;letter-spacing:0.190px">2024-04</div>
<div class="tx" style="left:2412.22px;top:1156.81px;font-size:14.8px;line-height:20px;color:#111">10</div>
<div class="tx" style="left:2416.33px;top:1118.99px;font-size:14.8px;line-height:20px;color:#111">6</div>
<div class="tx" style="left:2416.33px;top:1085.89px;font-size:14.8px;line-height:20px;color:#fff">8</div>
<div class="tx" style="left:2412.22px;top:1057.88px;font-size:14.8px;line-height:20px;color:#111;font-weight:700">28</div>
<div class="tx" style="left:2393.10px;top:1224.86px;font-size:14.6px;line-height:20px;color:#555;letter-spacing:0.190px">2024-05</div>
<div class="tx" style="left:2597.23px;top:1178.09px;font-size:14.8px;line-height:20px;color:#fff">5</div>
<div class="tx" style="left:2597.23px;top:1157.17px;font-size:14.8px;line-height:20px;color:#111;font-weight:700">7</div>
<div class="tx" style="left:2574.00px;top:1224.86px;font-size:14.6px;line-height:20px;color:#555;letter-spacing:0.190px">2024-06</div>
<div class="tx" style="left:2778.13px;top:1181.94px;font-size:14.8px;line-height:20px;color:#111;font-weight:700">1</div>
<div class="tx" style="left:2754.90px;top:1224.86px;font-size:14.6px;line-height:20px;color:#555;letter-spacing:0.190px">2024-07</div>
<div class="tx" style="left:861.08px;top:1199.86px;font-size:14.6px;line-height:20px;color:#666">0</div>
<div class="tx" style="left:852.97px;top:1152.84px;font-size:14.6px;line-height:20px;color:#666">10</div>
<div class="tx" style="left:852.97px;top:1105.82px;font-size:14.6px;line-height:20px;color:#666">20</div>
<div class="tx" style="left:852.97px;top:1058.80px;font-size:14.6px;line-height:20px;color:#666">30</div>
<div class="tx" style="left:852.97px;top:1011.78px;font-size:14.6px;line-height:20px;color:#666">40</div>
<div class="tx" style="left:852.97px;top:964.76px;font-size:14.6px;line-height:20px;color:#666">50</div>
<div class="tx" style="left:852.97px;top:917.74px;font-size:14.6px;line-height:20px;color:#666">60</div>
<div class="tx" style="left:1826.80px;top:1253.82px;font-size:18px;line-height:20px;color:#555;letter-spacing:-0.182px">Year - Month</div>
<div class="tx" style="left:2916.50px;top:1010.96px;font-size:14.6px;line-height:20px;color:#161616">Misprocessed</div>
<div class="tx" style="left:2916.50px;top:1035.96px;font-size:14.6px;line-height:20px;color:#161616">Starting Material</div>
<div class="tx" style="left:2916.50px;top:1060.96px;font-size:14.6px;line-height:20px;color:#161616">Substrate Broken</div>
<div class="tx" style="left:2916.50px;top:1085.96px;font-size:14.6px;line-height:20px;color:#161616">Cannot Rework</div>
<div class="tx" style="left:2916.50px;top:1110.96px;font-size:14.6px;line-height:20px;color:#161616">Stuck in Tool</div>
</body></html>
